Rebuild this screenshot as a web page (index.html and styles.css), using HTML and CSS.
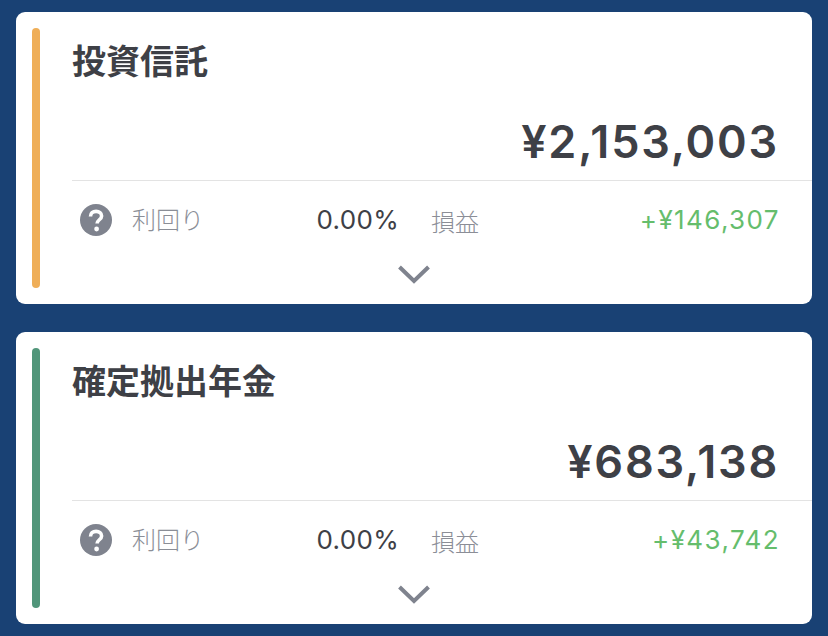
FILE: index.html
```html
<!DOCTYPE html>
<html lang="ja">
<head>
    <title>資産</title>
    <link rel="stylesheet" href="styles.css">
</head>
<body>
    <div class="card">
        <div class="bar bar-orange"></div>
        <div class="content">
            <div class="title">投資信託</div>
            <div class="amount">¥2,153,003</div>
            <div class="stats">
                <div class="stat stat-rate">
                    <svg class="help" viewBox="0 0 32 32">
                        <circle cx="16" cy="16" r="16" fill="#7f838e"/>
                        <path d="M10.500 12.400c0-3.200 2.300-5 5.600-5 3.200 0 5.500 1.900 5.500 4.500 0 3.800-4.500 3.900-4.500 7.600" fill="none" stroke="#fff" stroke-width="3.600"/>
                        <circle cx="16.600" cy="25" r="2.400" fill="#fff"/>
                    </svg>
                    <span class="label">利回り</span>
                    <span class="rate">0.00%</span>
                </div>
                <div class="stat stat-profit">
                    <span class="label label-profit">損益</span>
                    <span class="profit">+¥146,307</span>
                </div>
            </div>
            <svg class="chevron" viewBox="0 0 32 20">
                <path d="M1.500 2 16 16 30.500 2" fill="none" stroke="#7f838e" stroke-width="4"/>
            </svg>
        </div>
    </div>

    <div class="card">
        <div class="bar bar-green"></div>
        <div class="content">
            <div class="title">確定拠出年金</div>
            <div class="amount">¥683,138</div>
            <div class="stats">
                <div class="stat stat-rate">
                    <svg class="help" viewBox="0 0 32 32">
                        <circle cx="16" cy="16" r="16" fill="#7f838e"/>
                        <path d="M10.500 12.400c0-3.200 2.300-5 5.600-5 3.200 0 5.500 1.900 5.500 4.500 0 3.800-4.500 3.900-4.500 7.600" fill="none" stroke="#fff" stroke-width="3.600"/>
                        <circle cx="16.600" cy="25" r="2.400" fill="#fff"/>
                    </svg>
                    <span class="label">利回り</span>
                    <span class="rate">0.00%</span>
                </div>
                <div class="stat stat-profit">
                    <span class="label label-profit">損益</span>
                    <span class="profit">+¥43,742</span>
                </div>
            </div>
            <svg class="chevron" viewBox="0 0 32 20">
                <path d="M1.500 2 16 16 30.500 2" fill="none" stroke="#7f838e" stroke-width="4"/>
            </svg>
        </div>
    </div>
</body>
</html>
```

FILE: styles.css
```css
html, body {
    height: 100%;
}

body {
    margin: 0;
    padding: 12px 16px;
    box-sizing: border-box;
    background-color: #194174;
    font-family: "Noto Sans CJK JP", "Noto Sans", sans-serif;
    color: #3e4046;
    overflow: hidden;
}

.card {
    display: flex;
    height: 292px;
    box-sizing: border-box;
    margin-bottom: 28px;
    padding: 16px 0 16px 16px;
    background-color: white;
    border-radius: 9px;
}

.bar {
    flex: 0 0 8px;
    margin-right: 32px;
    border-radius: 4px;
}

.bar-orange {
    background-color: #efae58;
}

.bar-green {
    background-color: #51967a;
}

.content {
    flex: 1;
    display: flex;
    flex-direction: column;
}

.title {
    height: 68px;
    font-size: 34px;
    font-weight: 700;
    line-height: 64px;
}

.amount {
    height: 84px;
    padding-right: 33px;
    font-family: Inter, sans-serif;
    font-size: 45px;
    font-weight: 600;
    letter-spacing: 1.8px;
    line-height: 92px;
    text-align: right;
}

.stats {
    display: flex;
    align-items: center;
    height: 78px;
    padding-right: 32px;
    border-top: 1px solid #e3e3e3;
}

.stat {
    display: flex;
    align-items: center;
}

.stat-rate {
    flex: 0 0 327px;
}

.stat-profit {
    flex: 1;
    justify-content: space-between;
    margin-left: 32px;
}

.help {
    flex: 0 0 32px;
    height: 32px;
    margin: 0 20px 0 8px;
}

.label {
    margin-bottom: 4px;
    font-size: 24px;
    font-weight: 300;
    color: #8b8e97;
}

.label-profit {
    position: relative;
    top: 1px;
    margin-bottom: 2px;
}

.rate {
    margin-left: auto;
    margin-bottom: 2px;
    font-family: Inter, sans-serif;
    font-size: 26px;
    letter-spacing: 0.3px;
}

.profit {
    margin-bottom: 2px;
    font-family: Inter, sans-serif;
    font-size: 26px;
    letter-spacing: 1.4px;
    color: #65bd6c;
}

.chevron {
    width: 32px;
    height: 20px;
    margin-top: 6px;
    margin-left: 326px;
}
```
